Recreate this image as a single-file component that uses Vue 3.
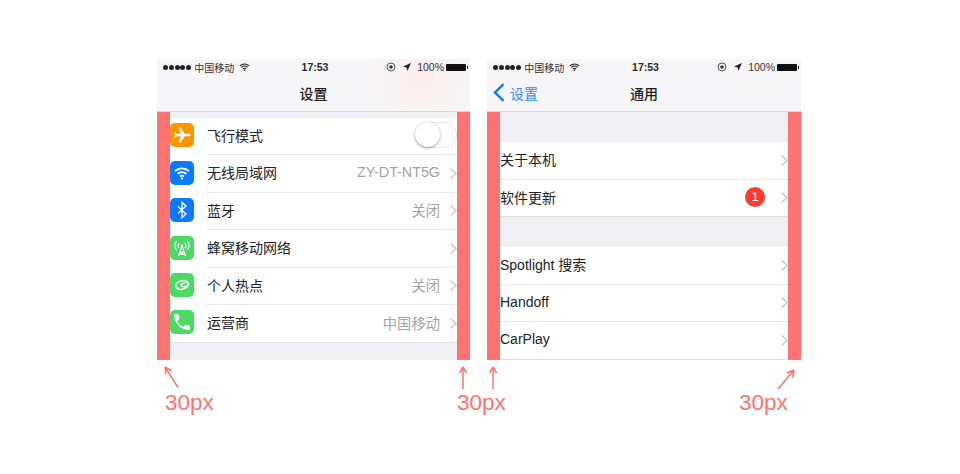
<script setup>
const settings = [
  { icon: "plane", color: "#ff9500", title: "飞行模式", toggle: true },
  { icon: "wifi", color: "#0a7aff", title: "无线局域网", value: "ZY-DT-NT5G" },
  { icon: "bluetooth", color: "#0a7aff", title: "蓝牙", value: "关闭" },
  { icon: "cell", color: "#4cd964", title: "蜂窝移动网络" },
  { icon: "hotspot", color: "#4cd964", title: "个人热点", value: "关闭" },
  { icon: "phone", color: "#4cd964", title: "运营商", value: "中国移动" },
];

const general = [
  [
    { title: "关于本机" },
    { title: "软件更新", badge: 1 },
  ],
  [
    { title: "Spotlight 搜索" },
    { title: "Handoff" },
    { title: "CarPlay" },
  ],
];

const phones = [
  { id: "settings", title: "设置", groups: [settings] },
  { id: "general", title: "通用", back: "设置", groups: general },
];
</script>

<template>
  <div class="page">
    <div class="phones">
      <section v-for="phone in phones" :key="phone.id" :class="['phone', 'phone-' + phone.id]">
        <header class="bar-top">
          <div class="status">
            <span class="signal"><i v-for="n in 5" :key="n"></i></span>
            <span class="carrier">中国移动</span>
            <svg class="status-wifi" viewBox="0 0 12 9" width="11" height="8">
              <path d="M.8 3.200a7.500 7.500 0 0 1 10.400 0M2.500 5a5 5 0 0 1 7 0M4.200 6.700a2.500 2.500 0 0 1 3.600 0" fill="none" stroke="#222" stroke-width="1.300" />
              <circle cx="6" cy="8" r="1" fill="#222" />
            </svg>
            <span class="time">17:53</span>
            <span class="status-right">
              <svg viewBox="0 0 10 10" width="10" height="10">
                <circle cx="5" cy="5" r="4" fill="none" stroke="#555" stroke-width="1" />
                <circle cx="5" cy="5" r="1.800" fill="#333" />
              </svg>
              <svg class="status-loc" viewBox="0 0 8 8" width="8" height="8">
                <path d="M8 0 0 3.600l3.600.8.8 3.600z" fill="#222" />
              </svg>
              <span class="percent">100%</span>
              <span class="battery"></span>
            </span>
          </div>
          <div class="nav">
            <div v-if="phone.back" class="back">
              <svg viewBox="0 0 12 19" width="12" height="19">
                <path d="M10.500 1.200 2 9.500l8.500 8.300" fill="none" stroke="#0a7aff" stroke-width="2.400" />
              </svg>
              <span>{{ phone.back }}</span>
            </div>
            <h1>{{ phone.title }}</h1>
          </div>
        </header>

        <div class="body">
          <div class="edge"></div>
          <div class="content">
            <div v-for="(group, i) in phone.groups" :key="i" class="group">
              <div v-for="row in group" :key="row.title" class="row">
                <span v-if="row.icon" class="icon" :style="{ background: row.color }">
                  <svg viewBox="0 0 24 24" width="24" height="24">
                    <path v-if="row.icon === 'plane'" fill="#fff" d="M20.500 12c0-.8-.7-1.300-1.500-1.300h-4.200L10.400 4.500H8.700l2.200 6.200H6.700L5.200 9.200H4l.9 2.800-.9 2.800h1.200l1.500-1.500h4.200l-2.200 6.200h1.700l4.400-6.200H19c.8 0 1.500-.5 1.500-1.300z" />
                    <g v-else-if="row.icon === 'wifi'" fill="none" stroke="#fff" stroke-width="1.700">
                      <path d="M5 10.200a10 10 0 0 1 14 0M7.500 12.900a6.500 6.500 0 0 1 9 0M10 15.500a3 3 0 0 1 4 0" />
                      <circle cx="12" cy="17.500" r="1" fill="#fff" stroke="none" />
                    </g>
                    <path v-else-if="row.icon === 'bluetooth'" d="M8 8.500l8 7.500-4 3.800V4.200L16 8l-8 7.500" fill="none" stroke="#fff" stroke-width="1.300" />
                    <g v-else-if="row.icon === 'cell'" fill="none" stroke="#fff" stroke-width="1.200">
                      <path d="M12 10 8.500 20M12 10l3.500 10M10 16h4M9.200 18.500l5.600-2M14.800 18.500l-5.600-2" />
                      <circle cx="12" cy="9.500" r="1.300" fill="#fff" stroke="none" />
                      <path d="M9.200 6.800a4 4 0 0 0 0 5.400M14.800 6.800a4 4 0 0 1 0 5.400M6.800 4.800a7 7 0 0 0 0 9.400M17.200 4.800a7 7 0 0 1 0 9.400" />
                    </g>
                    <path v-else-if="row.icon === 'hotspot'" fill="none" stroke="#fff" stroke-width="1.500" stroke-linecap="round" d="M8.500 15.500c-3-.5-3.800-3.300-2-5 2.200-2.300 6.500-3.600 9.500-2.600 2.800 1 3 3.600.8 5-1.800 1.200-5 1.200-5.600-.4-.5-1.400 1.300-2.500 3-2.200M15.500 8.500c3 .5 3.800 3.300 2 5-2.200 2.300-6.500 3.600-9.500 2.600" />
                    <path v-else transform="translate(1.500 1.500) scale(.88)" fill="#fff" d="M6.600 10.800c1.400 2.800 3.800 5.100 6.600 6.600l2.200-2.200c.3-.3.700-.4 1-.2 1.100.4 2.300.6 3.600.6.600 0 1 .4 1 1V20c0 .6-.4 1-1 1C10.600 21 3 13.400 3 4c0-.6.4-1 1-1h3.500c.6 0 1 .4 1 1 0 1.300.2 2.500.6 3.600.1.300 0 .7-.2 1z" />
                  </svg>
                </span>
                <div class="row-main">
                  <span class="row-title">{{ row.title }}</span>
                  <span v-if="row.toggle" class="toggle"><i></i></span>
                  <template v-else>
                    <span v-if="row.value" class="row-value">{{ row.value }}</span>
                    <span v-if="row.badge" class="badge">{{ row.badge }}</span>
                    <svg class="chevron" viewBox="0 0 7 11" width="7" height="11">
                      <path d="M.6.6 6 5.500.6 10.400" fill="none" stroke="#c7c7cc" stroke-width="1.400" />
                    </svg>
                  </template>
                </div>
              </div>
            </div>
          </div>
          <div class="edge"></div>
        </div>
      </section>
    </div>

    <div class="notes">
      <div class="note">
        <svg viewBox="0 0 50 28" width="50" height="28">
          <path d="M13 25.500 0 5M0 5l1 7.500M0 5l6.500 4" fill="none" stroke="#ff7373" stroke-width="1.500" />
        </svg>
        <span>30px</span>
      </div>
      <div class="note">
        <svg viewBox="0 0 50 28" width="50" height="28">
          <path d="M6 27V5M6 5 2.500 11M6 5l3.500 6M36 27V5M36 5l-3.500 6M36 5l3.500 6" fill="none" stroke="#ff7373" stroke-width="1.500" />
        </svg>
        <span>30px</span>
      </div>
      <div class="note">
        <svg viewBox="0 0 50 28" width="50" height="28">
          <path d="M39 27 55 8M55 8l-7 3M55 8l-1.500 7.500" fill="none" stroke="#ff7373" stroke-width="1.500" />
        </svg>
        <span>30px</span>
      </div>
    </div>
  </div>
</template>

<style>
body {
  background: #fff;
}
</style>

<style scoped>
.page {
  width: 960px;
  height: 474px;
  padding-top: 59px;
  box-sizing: border-box;
  overflow: hidden;
  font-family: "Liberation Sans", "Noto Sans CJK SC", sans-serif;
  color: #222;
}

.phones {
  display: flex;
  gap: 17px;
  padding-left: 157px;
}

.phone {
  display: flex;
  flex-direction: column;
  height: 301px;
}

.phone-settings {
  width: 313px;
}

.phone-general {
  width: 314px;
}

.bar-top {
  height: 53px;
  box-sizing: border-box;
  background: #f6f6f8;
  border-bottom: 1px solid #d6d6da;
}

.phone-settings .bar-top {
  background: radial-gradient(circle at 265px 20px, #fdeeea 0, #f8f4f5 36px, #f6f6f8 70px);
}

.status {
  display: flex;
  align-items: center;
  height: 16px;
  padding: 0 3px 0 6px;
  font-size: 10px;
  position: relative;
}

.signal {
  display: flex;
  gap: 0.8px;
}

.signal i {
  width: 5px;
  height: 5px;
  border-radius: 50%;
  background: #222;
}

.carrier {
  margin-left: 3px;
  color: #333;
}

.status-wifi {
  margin-left: 5px;
}

.time {
  position: absolute;
  left: 3px;
  right: 0;
  text-align: center;
  font-size: 10.500px;
  font-weight: 700;
  color: #2a2a2a;
}

.status-right {
  display: flex;
  align-items: center;
  margin-left: auto;
}

.status-right svg:first-child {
  margin-right: 1px;
}

.status-loc {
  margin-left: 6px;
}

.percent {
  margin-left: 6px;
  font-size: 10.500px;
  color: #333;
}

.battery {
  width: 20px;
  height: 7px;
  margin-left: 2px;
  margin-right: 1px;
  border-radius: 1px;
  background: #111;
  position: relative;
}

.battery::after {
  content: "";
  position: absolute;
  right: -2px;
  top: 2px;
  width: 1.500px;
  height: 3px;
  background: #222;
}

.nav {
  position: relative;
  display: flex;
  align-items: center;
  justify-content: center;
  height: 35px;
}

.nav h1 {
  margin: 0;
  font-size: 14px;
  font-weight: 500;
  color: #1c1c1c;
}

.back {
  position: absolute;
  left: 6px;
  top: 0;
  bottom: 0;
  display: flex;
  align-items: center;
  gap: 5px;
  font-size: 14px;
  color: #2f8df5;
}

.body {
  flex: 1;
  display: flex;
  min-height: 0;
}

.edge {
  width: 13px;
  flex: none;
  background: #ff7373;
}

.content {
  flex: 1;
  min-width: 0;
  background: #efeff4;
}

.phone-settings .content {
  padding-top: 5.500px;
}

.phone-general .content {
  padding-top: 30px;
  background: linear-gradient(#efeff4 247px, #fff 247px);
}

.phone-general .group + .group {
  margin-top: 30px;
}

.group {
  background: #fff;
}

.row {
  display: flex;
  align-items: center;
  height: 37.500px;
}

.icon {
  flex: none;
  width: 24px;
  height: 24px;
  margin-right: 13px;
  margin-top: -2px;
  border-radius: 5px;
  display: block;
}

.icon svg {
  display: block;
}

.row-main {
  flex: 1;
  min-width: 0;
  height: 100%;
  box-sizing: border-box;
  display: flex;
  align-items: center;
  padding-bottom: 2px;
  border-bottom: 1px solid #e6e6e9;
}

.row:last-child {
  border-bottom: 1px solid #e0e0e4;
  box-sizing: border-box;
}

.row:last-child .row-main {
  border-bottom: 0;
}

.row-title {
  flex: 1;
  font-size: 14px;
  color: #222;
}

.row-value {
  font-size: 14.300px;
  color: #a2a2a7;
  margin-right: 10px;
}

.badge {
  width: 20px;
  height: 20px;
  margin-right: 16px;
  border-radius: 50%;
  background: #ff3b30;
  color: #fff;
  font-size: 13px;
  line-height: 20px;
  text-align: center;
}

.chevron {
  flex: none;
  margin-top: 2px;
}

.toggle {
  width: 42px;
  height: 26px;
  box-sizing: border-box;
  border: 1px solid #e5e5e5;
  border-radius: 13px;
  background: #fff;
  position: relative;
}

.toggle i {
  position: absolute;
  left: -1px;
  top: -1px;
  width: 25px;
  height: 25px;
  border-radius: 50%;
  background: #fff;
  box-shadow: 0 1px 3px rgba(0, 0, 0, 0.4);
}

.notes {
  display: grid;
  grid-template-columns: 292px 282px 50px;
  padding-left: 165px;
  margin-top: 2px;
}

.note {
  display: flex;
  flex-direction: column;
  color: #ff7373;
  font-size: 22.500px;
  line-height: 26px;
}

.note svg {
  display: block;
  overflow: visible;
}
</style>
